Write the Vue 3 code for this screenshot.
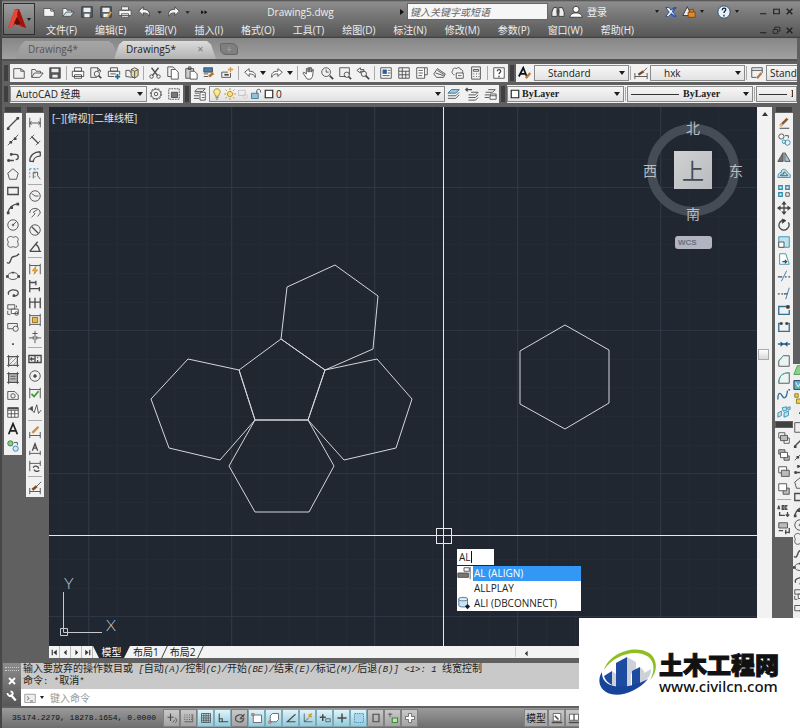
<template>
  <div class="cad">
    <header class="titlebar">
      <button class="app-btn" aria-label="应用程序菜单">
        <svg class="app-logo" viewBox="0 0 20 22">
          <path d="M8 1h4l7 19-6-2-3-3-4 3-5 2z" fill="#c41f14" />
          <path d="M8 1l-7 19 5-2 4-9 1-7z" fill="#e5483a" />
          <path d="M10 9l-3 6 3 2 4-1z" fill="#5c0d08" />
          <path d="M12 1l7 19-5-2-4-12z" fill="#a3130c" />
        </svg>
        <i class="caret"></i>
      </button>
      <div class="title-rows">
        <div class="title-row">
          <div class="quick">
            <button v-for="q in quickTools" :key="q" class="tool quick-tool" :aria-label="q">
              <svg class="icon" viewBox="0 0 16 16" v-html="icons[q]"></svg>
            </button>
            <button class="tool more" aria-label="more">
              <svg class="icon" viewBox="0 0 16 16" v-html="icons.more"></svg>
            </button>
          </div>
          <h1 class="title">Drawing5.dwg</h1>
          <i class="tri-right"></i>
          <input class="search" type="text" placeholder="键入关键字或短语" aria-label="搜索" />
          <div class="account">
            <svg class="icon" viewBox="0 0 16 16" v-html="icons.binoc"></svg>
            <svg class="icon" viewBox="0 0 16 16" v-html="icons.user"></svg>
            <a href="#" class="login">登录</a>
            <i class="caret"></i>
          </div>
          <div class="exchange">
            <svg class="icon" viewBox="0 0 16 16" v-html="icons.exch"></svg>
            <svg class="icon" viewBox="0 0 16 16" v-html="icons.app360"></svg>
            <i class="caret"></i>
          </div>
          <div class="help">
            <svg class="icon" viewBox="0 0 16 16" v-html="icons.helpRound"></svg>
            <i class="caret"></i>
          </div>
          <div class="win">
            <button v-for="w in ['min', 'max', 'close']" :key="w" class="win-btn" :aria-label="w">
              <svg class="icon" viewBox="0 0 16 16" v-html="icons[w]"></svg>
            </button>
          </div>
        </div>
        <nav class="menu">
          <a v-for="m in menus" :key="m" href="#">{{ m }}</a>
          <div class="win">
            <button v-for="w in ['min', 'restore', 'close']" :key="w" class="win-btn" :aria-label="w">
              <svg class="icon" viewBox="0 0 16 16" v-html="icons[w]"></svg>
            </button>
          </div>
        </nav>
      </div>
    </header>

    <div class="doc-tabs">
      <button class="doc-tab">Drawing4*</button>
      <button class="doc-tab active">Drawing5*<span class="tab-x">✕</span></button>
      <button class="new-tab" aria-label="新图形">+</button>
    </div>

    <div class="bars">
      <div class="bar-row">
        <i class="grip"></i>
        <div class="strip">
          <template v-for="(t, i) in stdTools" :key="i">
            <i v-if="t === '|'" class="sep"></i>
            <i v-else-if="t === 'v'" class="caret pad"></i>
            <button v-else class="tool" :aria-label="t">
              <svg class="icon" viewBox="0 0 16 16" v-html="icons[t]"></svg>
            </button>
          </template>
        </div>
        <i class="grip"></i>
        <div class="strip grow">
          <template v-for="s in styleBoxes" :key="s.icon">
            <button class="tool" :aria-label="s.icon">
              <svg class="icon" viewBox="0 0 16 16" v-html="icons[s.icon]"></svg>
            </button>
            <div class="combo" :class="s.size">
              <select :aria-label="s.icon"><option>{{ s.value }}</option></select>
              <i class="caret"></i>
            </div>
            <i class="sep thin"></i>
          </template>
        </div>
      </div>
      <div class="bar-row">
        <i class="grip"></i>
        <div class="strip">
          <div class="combo workspace">
            <select aria-label="工作空间"><option>AutoCAD 经典</option></select>
            <i class="caret"></i>
          </div>
          <button v-for="t in ['gear', 'wsSave']" :key="t" class="tool" :aria-label="t">
            <svg class="icon" viewBox="0 0 16 16" v-html="icons[t]"></svg>
          </button>
        </div>
        <i class="grip"></i>
        <div class="strip">
          <button class="tool" aria-label="layers">
            <svg class="icon" viewBox="0 0 16 16" v-html="icons.layers"></svg>
          </button>
          <div class="combo layer">
            <svg
              v-for="t in ['bulb', 'sun', 'vpFreeze', 'lock', 'swatch']"
              :key="t"
              class="icon mini"
              viewBox="0 0 16 16"
              v-html="icons[t]"
            ></svg>
            <select aria-label="图层"><option>0</option></select>
            <i class="caret"></i>
          </div>
          <button v-for="t in ['layA', 'layB', 'layC']" :key="t" class="tool" :aria-label="t">
            <svg class="icon" viewBox="0 0 16 16" v-html="icons[t]"></svg>
          </button>
        </div>
        <i class="grip"></i>
        <div class="strip grow">
          <div class="combo color serif">
            <svg class="icon mini" viewBox="0 0 16 16" v-html="icons.swatch"></svg>
            <select aria-label="颜色"><option>ByLayer</option></select>
            <i class="caret"></i>
          </div>
          <i class="sep thin"></i>
          <div class="combo ltype serif">
            <i class="rule"></i>
            <select aria-label="线型"><option>ByLayer</option></select>
            <i class="caret"></i>
          </div>
          <i class="sep thin"></i>
          <div class="combo lweight serif">
            <i class="rule"></i>
            <select aria-label="线宽"><option>ByLayer</option></select>
          </div>
        </div>
      </div>
    </div>

    <main class="work">
      <aside class="dock">
        <div v-for="(col, c) in leftDock" :key="c" class="vbar">
          <i class="vgrip"></i>
          <div class="vstrip">
            <template v-for="(t, i) in col" :key="i">
              <i v-if="t === '|'" class="hsep"></i>
              <button v-else class="tool" :aria-label="t">
                <svg class="icon" viewBox="0 0 16 16" v-html="icons[t]"></svg>
              </button>
            </template>
          </div>
        </div>
      </aside>

      <section class="view">
        <div class="canvas">
          <svg class="drawing">
            <g stroke="#242b35">
              <line v-for="x in minorX" :key="'mx' + x" :x1="x" y1="0" :x2="x" y2="100%" />
              <line v-for="y in minorY" :key="'my' + y" x1="0" :y1="y" x2="100%" :y2="y" />
            </g>
            <g stroke="#2c3644">
              <line v-for="x in majorX" :key="'x' + x" :x1="x" y1="0" :x2="x" y2="100%" />
              <line v-for="y in majorY" :key="'y' + y" x1="0" :y1="y" x2="100%" :y2="y" />
            </g>
            <g class="shapes">
              <polygon v-for="p in polygons" :key="p" :points="p" />
            </g>
            <g class="cross">
              <path d="M394.5 0V1000M0 428.5H2000" />
              <rect x="387.500" y="421.500" width="15" height="15" />
            </g>
            <g class="ucs">
              <path d="M14.500 485V525.500H53M11.500 521.500h7v7h-7z" />
              <text x="15" y="482">Y</text>
              <text x="57" y="524">X</text>
            </g>
          </svg>

          <span class="view-label">[−][俯视][二维线框]</span>

          <div class="cube">
            <span class="n">北</span>
            <span class="w">西</span>
            <span class="e">东</span>
            <span class="s">南</span>
            <b class="face">上</b>
          </div>
          <button class="wcs">WCS</button>

          <div class="dyn">
            <input class="dyn-input" type="text" :value="typed" aria-label="命令" />
            <ul class="dyn-list">
              <li v-for="(s, i) in suggestions" :key="s.text">
                <span class="sug-icon">
                  <svg v-if="s.icon" class="icon" viewBox="0 0 16 16" v-html="icons[s.icon]"></svg>
                </span>
                <span class="sug-text" :class="{ on: i === 0 }">{{ s.text }}</span>
              </li>
            </ul>
          </div>
        </div>
        <div class="layouts">
          <button v-for="a in ['first', 'prev', 'next', 'last']" :key="a" class="nav" :aria-label="a">
            <svg class="icon" viewBox="0 0 16 16" v-html="icons[a]"></svg>
          </button>
          <button class="layout current">模型</button>
          <button class="layout">布局1</button><i class="slash"></i>
          <button class="layout">布局2</button><i class="slash"></i>
          <div class="hscroll"><svg class="icon" viewBox="0 0 16 16" v-html="icons.prev"></svg></div>
        </div>
      </section>

      <div class="vscroll">
        <i class="tri-up"></i>
        <i class="thumb"></i>
      </div>

      <aside class="dock right">
        <div class="vbar">
          <template v-for="(col, c) in rightDock" :key="c">
            <i class="vgrip"></i>
            <div class="vstrip">
              <template v-for="(t, i) in col" :key="i">
                <i v-if="t === '|'" class="hsep"></i>
                <button v-else class="tool" :aria-label="t">
                  <svg class="icon" viewBox="0 0 16 16" v-html="icons[t]"></svg>
                </button>
              </template>
            </div>
          </template>
        </div>
      </aside>

      <div class="behind">
        <svg v-for="(t, i) in behindTools" :key="i" class="icon" viewBox="0 0 16 16" v-html="icons[t]"></svg>
      </div>
    </main>

    <section class="command">
      <div class="cmd-side">
        <i class="dots"></i>
        <svg class="icon" viewBox="0 0 16 16" v-html="icons.cmdClose"></svg>
        <svg class="icon" viewBox="0 0 16 16" v-html="icons.wrench"></svg>
      </div>
      <div class="cmd-body">
        <div class="history">
          <p v-for="(line, l) in history" :key="l">
            <span v-for="(r, i) in line" :key="i" :class="{ han: r.han, it: r.it }">{{ r.text }}</span>
          </p>
        </div>
        <div class="prompt">
          <svg class="icon" viewBox="0 0 16 16" v-html="icons.prompt"></svg>
          <i class="caret"></i>
          <input type="text" placeholder="键入命令" aria-label="键入命令" />
        </div>
      </div>
    </section>

    <footer class="status">
      <span class="coords">35174.2279, 18278.1654, 0.0000</span>
      <button v-for="s in modes" :key="s.icon" class="mode" :class="{ on: s.on }" :aria-label="s.icon">
        <svg class="icon" viewBox="0 0 16 16" v-html="icons[s.icon]"></svg>
      </button>
      <div class="status-right">
        <button class="mode model">模型</button>
        <button class="mode" aria-label="layout"><svg class="icon" viewBox="0 0 16 16" v-html="icons.paper"></svg></button>
        <button class="mode" aria-label="views"><svg class="icon" viewBox="0 0 16 16" v-html="icons.views"></svg></button>
      </div>
    </footer>

    <a class="brand" href="#">
      <svg class="brand-logo" viewBox="0 0 60 50">
        <path d="M5 22C10 5 36-4 50 5c10 7 8 20 1 27 5-9 5-19-3-24C36 1 15 7 5 22z" fill="#8fbe22" />
        <path d="M17 15l11-6v30H17z" fill="#1d4b9f" />
        <path d="M28 9l9 5v9l-5 3v13h-4z" fill="#cdd2d8" />
        <path d="M33 23l8-4v18l-8 3z" fill="#1d4b9f" />
        <path d="M41 19l4 4v11l-4 3zM45 25l7-4c0 6-2 9-7 12z" fill="#cdd2d8" />
        <path d="M5 28l8-5v14c-4-2-7-5-8-9z" fill="#1d4b9f" />
        <path d="M13 23l4 3v12l-4-1z" fill="#cdd2d8" />
        <path d="M3 24c-1 16 22 20 46 7C36 46 17 50 7 44-1 39-1 30 3 24z" fill="#17439a" />
      </svg>
      <span class="brand-text">
        <strong>土木工程网</strong>
        <em>www.civilcn.com</em>
      </span>
    </a>
  </div>
</template>

<script setup>
import { ref } from 'vue';

const typed = ref('AL');

const menus = [
  '文件(F)', '编辑(E)', '视图(V)', '插入(I)', '格式(O)', '工具(T)',
  '绘图(D)', '标注(N)', '修改(M)', '参数(P)', '窗口(W)', '帮助(H)',
];

const blue = 'stroke="#2f8fae"';
const cyan = 'fill="#bfe3ec" stroke="#2f8fae"';
const solid = 'fill="#444" stroke="none"';
const white = 'fill="#f4f4f4" stroke="#555"';
const dim = '<path d="M2 2v11M14 2v11M2 8h12M4 6l-2 2 2 2M12 6l2 2-2 2"/>';

// 16x16 glyphs, stroke colour comes from the toolbar
const icons = {
  // quick access
  qNew: `<path ${white} d="M2 4h8l4 3v6H2z"/><path d="M10 4v3h4"/>`,
  qOpen: `<path ${white} d="M2 13V4h4l1 2h5v2"/><path fill="#cfe0e8" d="M2 13l4-5h9l-4 5z"/>`,
  qSave: `<path fill="#54636f" stroke="#333" d="M2 2h12v12H2z"/><path fill="#eee" stroke="none" d="M4 3h8v5H4zM5 10h6v4H5z"/>`,
  qSaveAs: `<path fill="#54636f" stroke="#333" d="M2 2h12v12H2z"/><path fill="#eee" stroke="none" d="M4 3h8v5H4zM5 10h6v4H5z"/><path stroke="#e7a13a" stroke-width="2" d="M9 14l5-6"/>`,
  qPrint: `<path ${white} d="M4 2h8v4H4zM1 6h14v6H1zM4 10h8v4H4z"/>`,
  qUndo: `<path fill="#f4f4f4" stroke="#444" d="M2 7l5-5v3c5 0 8 2 7 8-1-3-3-4-7-4v3z"/>`,
  qRedo: `<path fill="#f4f4f4" stroke="#444" d="M14 7L9 2v3c-5 0-8 2-7 8 1-3 3-4 7-4v3z"/>`,
  qCaret: '<path fill="#222" stroke="none" d="M5 7h5l-2.500 3z"/>',
  more: '<path fill="#111" stroke="none" d="M2 5l5 3.500L2 12zM8 5l5 3.500L8 12z"/>',
  binoc: '<path fill="#eee" stroke="#333" d="M3 3h4v10H1V8zM9 3h4l2 5v5H9zM7 6h2v3H7z"/>',
  user: '<circle fill="#fff" stroke="#333" cx="8" cy="5" r="3.500"/><path fill="#fff" stroke="#333" d="M1 14c0-3 3-5 7-5s7 2 7 5z"/>',
  exch: '<path fill="#fff" stroke="#1f3f8f" d="M2 3h4l2 3 3-3h3l-4 5 4 5h-4l-2-3-3 3H2l4-5z"/><path fill="#2c57b5" stroke="none" d="M10 3h4l-5 6zM7 8l3 5h4z"/>',
  app360: '<path fill="#eee" stroke="#333" d="M1 12L6 2l5 10z"/><path fill="#e08a2c" stroke="#7a4210" d="M7 8h8v6H7zM9 8V5h4v3"/>',
  helpRound: '<circle cx="8" cy="8" r="7" fill="#e9f1f8" stroke="#2a4a70"/><path d="M6 6c0-3 4-3 4-1 0 2-2 2-2 4M8 11v2" stroke="#123" stroke-width="1.500"/>',
  min: '<path stroke="#222" stroke-width="2" d="M2 12h11"/>',
  max: '<path stroke="#222" stroke-width="2" d="M3 4h10v8H3z"/>',
  restore: '<path stroke="#222" stroke-width="1.500" d="M5 6V2h9v7h-4M2 6h8v7H2z"/>',
  close: '<path stroke="#222" stroke-width="2.500" d="M3 3l10 10M13 3L3 13"/>',

  // standard
  new: '<path d="M2 3h8l4 3v8H2zM10 3v3h4"/>',
  open: '<path d="M2 13V4h4l1 2h5v2M2 13l3-5h10l-4 5z"/>',
  save: '<path fill="#555" d="M2 2h12v12H2z"/><path fill="#eee" stroke="none" d="M4 3h8v4H4zM5 10h6v3H5z"/>',
  print: '<path fill="#fff" d="M4 2h8v4H4zM1.500 6h13v6h-13zM4 10h8v4H4z"/>',
  preview: '<path d="M9 13H2V2h8l3 3v2M10 2v3h3"/><circle cx="9" cy="9" r="3"/><path stroke-width="2" d="M11 11l3 3"/>',
  publish: '<path d="M4 2h8v4H4zM1.500 6h13v4M1.500 6v6H8M4 9h6"/><path stroke="#1d6a8c" stroke-width="2" d="M12 9v6M9 12h6"/>',
  dwf: '<path d="M1 12V5h4l1 2h3v6z"/><path fill="#e8d9a0" d="M7 4l4-2 4 2v7l-4 3-4-3zM7 4l4 2 4-2M11 6v8"/>',
  cut: '<path stroke-width="1.500" d="M4 2l7 9M12 2L5 11"/><circle cx="4" cy="12" r="2"/><circle cx="12" cy="12" r="2"/>',
  copy: '<path d="M2 1h6l2 2v9H2z"/><path fill="#fff" d="M6 4h5l3 3v8H6z"/>',
  paste: '<path fill="#ccc" d="M2 3h9v11H2zM5 1h3v3H5z"/><path fill="#fff" d="M7 6h5l3 3v6H7z"/>',
  match: '<path fill="#3f7fb3" d="M2 2h10v5H2z"/><path d="M2 9h5M2 12h5"/><path stroke="#b8732e" stroke-width="3" d="M8 12l5-4"/>',
  blockEd: '<path d="M2 7h7M2 7v6h10V8"/><path d="M5 10h5" stroke-width="2"/><path stroke="#e09a2c" stroke-width="1.500" d="M12 1v6M9 4h6"/>',
  undo: '<path fill="#fff" d="M2 7l5-4v3c5 0 8 2 7 7-1-3-3-4-7-4v3z"/>',
  redo: '<path fill="#fff" d="M14 7L9 3v3c-5 0-8 2-7 7 1-3 3-4 7-4v3z"/>',
  pan: '<path fill="#fff" d="M5 9V3h2v4V2h2v5V2h2v5l1-3h1l-1 8-2 3H6L1 8l1-1z"/>',
  zoomRt: '<circle cx="7" cy="7" r="5"/><path d="M7 4v3h3"/><path stroke-width="2" d="M11 11l4 4"/>',
  zoomWin: '<path d="M2 2h11v8M2 2v10h7"/><circle cx="10" cy="10" r="3"/><path stroke-width="2" d="M12 12l3 3"/>',
  zoomPrev: '<path d="M1 5l4-3v2h4v2H5v2z"/><circle cx="9" cy="9" r="3"/><path stroke-width="2" d="M11 11l4 4"/>',
  props: '<path fill="#fff" d="M2 2h12v12H2z"/><path fill="#2e5f96" stroke="none" d="M4 4h5v5H4z"/><path d="M10 5h3M10 8h3M4 11h8"/>',
  dc: '<path d="M2 2h12v12H2zM2 6h12M6 2v12M10 6v8M2 10h12"/>',
  palette: '<path fill="#fff" d="M2 2h9v12H2zM11 2h3v8h-3"/><path d="M4 5h5M4 8h5M4 11h4"/>',
  sheet: '<path d="M1 9l4-6 9 6-2 4H4z"/><path d="M3 8l9 3M5 5l8 5"/>',
  markup: '<path d="M2 5c0-3 3-3 4-2 2-2 5-1 5 1 3 0 3 4 1 5M2 5c-2 2 0 5 2 5"/><path fill="#fff" d="M6 8h8v6H6zM8 11h4"/>',
  calc: '<path d="M3 1h10v14H3zM5 4h6v2H5zM5 9h1M8 9h1M11 9h1M5 12h1M8 12h1M11 12h1"/>',
  help: '<path fill="#fff" d="M2 2h12v12H2z"/><path stroke-width="1.500" d="M6 6c0-2.500 4-2.500 4 0 0 1.500-2 1.500-2 3.500M8 11v2"/>',
  textStyle: '<path stroke="#111" stroke-width="2" d="M1 12L6 2l4 10M3 9h6"/><path stroke="#b9773c" stroke-width="2.500" d="M9 14l5-6"/>',
  dimStyle: '<path d="M1 8v7M15 8v7M1 12h14"/><path stroke="#7d4a22" stroke-width="2.500" d="M5 10l6-4"/><path d="M11 6l4-4"/>',
  tblStyle: '<path d="M2 2h12v6M2 2v11h5M2 5h12"/><path stroke="#b9773c" stroke-width="2.500" d="M8 14l5-6"/>',
  gear: '<circle cx="8" cy="8" r="2"/><circle cx="8" cy="8" r="5.500"/><circle cx="8" cy="8" r="6.500" stroke-dasharray="2 2"/>',
  wsSave: '<path stroke-dasharray="2 1" d="M2 2h12v12H2z"/><path fill="#777" d="M5 6h7v6H5z"/>',
  layers: '<path d="M5 2h9l-3 3H2zM2 7h5M1 10h6M1 13h6"/><path fill="#fff" d="M8 6h6v9H8zM10 9h3M10 12h3"/>',
  bulb: '<path fill="#ffe98a" stroke="#8b7a2a" d="M8 1c-5 0-5 5-3 7l1 3h4l1-3c2-2 2-7-3-7z"/><path d="M6 13h4M7 15h2"/>',
  sun: '<circle cx="8" cy="8" r="3.500" fill="#ffe27a" stroke="#a87f1c"/><path stroke="#a87f1c" d="M8 0v3M8 13v3M0 8h3M13 8h3M2 2l2 2M12 12l2 2M14 2l-2 2M4 12l-2 2"/>',
  vpFreeze: '<path stroke="#bbb" d="M2 3h9v7H2z"/><circle cx="11" cy="11" r="3" stroke="#ccc"/>',
  lock: '<path fill="#8fc3da" stroke="#2b6785" d="M2 7h9v7H2z"/><path stroke="#333" d="M9 7V4c0-3 5-3 5 0v2"/>',
  swatch: '<path fill="#fff" stroke="#222" stroke-width="1.500" d="M3 3h10v10H3z"/>',
  layA: '<path fill="#9fd0e2" stroke="#2b6785" d="M5 3h9l-4 4H1z"/><path d="M1 10h9l4-4M1 13h9l4-4"/>',
  layB: '<path d="M7 6h8l-3 3H4M4 12h8l3-3M4 15h8l3-3"/><path stroke-width="1.500" d="M8 3H1M3 1L1 3l2 2"/>',
  layC: '<path d="M6 3h8l-3 3H3M2 9h5M2 12h5"/><path fill="#fff" d="M8 8h7v6H8zM8 10h7"/>',

  // draw
  line: `<path stroke-width="1.500" d="M2 14L14 2"/><path ${solid} d="M1 13h3v3H1zM12 1h3v3h-3z"/>`,
  xline: `<path d="M2 14L14 2"/><path ${solid} d="M4 9h3v3H4zM9 5h3v3H9z"/>`,
  pline: '<path stroke-width="1.500" d="M2 12h7M6 5h5c4 0 4 6 0 6"/><path fill="#444" d="M2 11h2v2H2zM5 4h2v2H5z"/>',
  polygon: '<path d="M8 2l6 5-2 7H4L2 7z"/>',
  rect: '<path stroke-width="1.500" d="M2 4h12v8H2z"/>',
  arc: `<path stroke-width="1.500" d="M2 14C3 8 7 4 14 3"/><path ${solid} d="M1 12h3v3H1zM5 6h3v3H5zM12 2h3v3h-3z"/>`,
  circle: '<circle cx="8" cy="8" r="6"/><circle cx="8" cy="8" r="1"/><path d="M8 8l4-4"/>',
  revcloud: '<path d="M4 2c2-1 3 0 4 1 2-2 6-1 6 2 0 1-1 2-1 3 2 2 1 6-2 6-1 0-2 0-3-1-2 2-6 1-6-2 0-1 0-2 1-3-2-2-2-5 1-6z"/>',
  spline: '<path stroke-width="1.500" d="M1 12c4 3 4-4 6-6s4 1 8-4"/>',
  ellipse: `<ellipse cx="8" cy="8" rx="6" ry="4"/><path ${solid} d="M0 7h3v3H0zM13 7h3v3h-3zM7 3h2v2H7z"/>`,
  earc: '<path stroke-width="1.500" d="M3 10C0 4 14 2 14 8c0 3-4 4-6 3"/><path fill="#444" d="M8 10h2v2H8z"/>',
  insert: '<path d="M2 2h8v5H2z"/><path fill="#fff" d="M6 7h8v5H6zM2 9v4h3M12 5V3"/><circle cx="12" cy="12" r="2"/>',
  block: '<path d="M2 4h11v4M2 4v6h6"/><circle cx="11" cy="10" r="3"/>',
  point: '<path fill="#444" stroke="none" d="M7 7h2v2H7z"/>',
  hatch: '<path d="M3 3h10v10H3zM1 3h14M1 13h14M3 1v14M13 1v14"/><path stroke="#888" d="M3 8l5-5M3 13L13 3M8 13l5-5"/>',
  gradient: '<path fill="#bbb" d="M3 3h10v10H3z"/><path d="M1 3h14M1 13h14M3 1v14M13 1v14M5 6h6M5 9h6"/>',
  region: '<path d="M2 13V4h8l4 4v5z"/><circle cx="8" cy="9" r="2.500"/>',
  table: '<path fill="#fff" d="M2 3h12v11H2z"/><path d="M2 6h12M2 10h12M6 6v8M10 6v8" /><path stroke-width="2" d="M2 4h12"/>',
  mtext: '<path stroke="#222" stroke-width="2" d="M3 14L8 2l5 12M5 10h6"/>',
  addSel: '<circle cx="5" cy="5" r="3" fill="#8cc98c" stroke="#2c7d3c"/><circle cx="11" cy="11" r="3" fill="#cfe8f5" stroke="#2f7fae"/><path d="M9 4h4v3"/>',

  // dimension
  dLin: dim,
  dAli: '<path stroke-width="1.500" d="M4 4l8 8"/><path d="M2 7l5-5M9 14l5-5"/>',
  dArc: '<path stroke-width="1.500" d="M2 13C2 6 7 2 14 2M6 14c0-4 3-7 8-7M2 13h4M14 2v5"/>',
  dOrd: `<path ${blue} stroke-dasharray="2 2" d="M2 2h12M2 2v12M8 2v12"/><path d="M6 13V6h5v4l3 4"/>`,
  dRad: '<circle cx="8" cy="8" r="6"/><path d="M8 8l-4-3M8 8h4"/>',
  dJog: '<path d="M2 8c0-7 12-7 12 0M4 13l4-4-2-2 5-3M14 8l-3 4"/>',
  dDia: '<circle cx="8" cy="8" r="6"/><path stroke-width="1.500" d="M4 4l8 8"/>',
  dAng: '<path stroke-width="1.500" d="M2 13L11 2M2 13h13M9 5c3 2 4 4 4 8"/>',
  dQuick: '<path d="M2 2v12M14 2v12M2 4h12"/><path fill="#f2c24a" stroke="#c8881c" d="M9 5l-4 5h3l-1 4 4-5H8z"/>',
  dBase: '<path stroke-width="1.500" d="M2 1v14M2 4h7M9 2v5M2 11h11M13 9v5"/>',
  dCont: '<path stroke-width="1.500" d="M2 2v12M8 2v12M14 2v12M2 7h12"/>',
  dSpace: '<path d="M2 1v14M14 1v14M2 3h12M2 13h12"/><path fill="#e8b84a" stroke="#85651a" d="M5 5h6v6H5z"/>',
  dBreak: '<path d="M1 9h5M10 9h5M8 1v14M5 4h6M6 7v4M10 7v4"/>',
  tol: '<path d="M1 4h14v8H1zM8 4v8M2 8h5M4 6v4M11 6v1M11 9v2" stroke-width="1.500"/>',
  cmark: '<circle cx="8" cy="8" r="6"/><path stroke-width="2" d="M6 8h4M8 6v4"/>',
  insp: '<path d="M2 2v12M14 2v12M2 4h12"/><path stroke="#3a9a3a" stroke-width="2" d="M4 9l3 3 5-6"/>',
  jogLin: '<path d="M0 7h4l3 4 3-9 2 10 3-4"/><path fill="#444" d="M2 6l3-2v5z"/>',
  dEdit: '<path d="M2 8v7M14 8v7M2 12h12"/><path stroke="#cf8a3c" stroke-width="2.500" d="M5 9l7-7"/>',
  dText: '<path d="M2 10v5M14 10v5M2 13h12"/><path stroke-width="1.500" d="M5 10l3-8 3 8M6 7h4"/>',
  dUpd: '<path d="M2 2v12M14 2v6M2 5h12"/><path stroke-width="1.500" d="M6 10c1-3 6-2 6 1M13 13c-2 2-6 1-6-1"/>',
  dSty: '<path d="M2 8v7M14 8v7M2 12h12"/><path stroke="#7d4a22" stroke-width="3" d="M5 10l5-4"/><path d="M10 6l5-5"/>',

  // modify
  erase: '<path stroke="#333" d="M3 14h11"/><path stroke="#8a5a32" stroke-width="3" d="M4 11l8-8"/><path stroke="#e8c193" stroke-width="2" d="M3 12l3-3"/>',
  mcopy: `<circle cx="5" cy="4" r="3"/><circle cx="12" cy="11" r="3" ${blue}/><circle cx="8" cy="10" r="2" ${blue}/><path d="M9 3h4v3"/>`,
  mirror: '<path fill="#777" d="M7 3v10H1z"/><path fill="#9cd" d="M9 3v10h6z"/>',
  offset: `<path ${cyan} d="M1 12h14c1-5-2-4-3-6C10 1 4 2 5 6c-3 0-4 3-4 6z"/><path d="M4 10h8c0-2-2-2-3-4-1-1-2 0-1 2-2 0-4 0-4 2z"/>`,
  array: `<path ${blue} stroke-width="1.500" d="M2 2h4v4H2zM10 2h4v4h-4zM2 10h4v4H2z"/><path d="M10 10h4v4h-4z"/>`,
  move: `<path stroke-width="1.500" d="M8 2v12M2 8h12"/><path ${solid} d="M8 0l3 4H5zM8 16l3-4H5zM0 8l4-3v6zM16 8l-4-3v6z"/>`,
  rotate: '<path stroke-width="1.500" d="M10 3C2 1 0 10 5 13s11-3 8-8"/><path fill="#333" d="M6 1l4 2-4 3z"/>',
  scale: `<path ${cyan} d="M2 2h12v12H2z"/><path fill="#fff" d="M2 8h6v6H2z"/>`,
  stretch: `<path fill="#fff" ${blue} d="M3 2h7l4 12H3z"/><path stroke-width="1.500" d="M6 11h5M9 9l2 2-2 2"/>`,
  trim: '<path d="M1 9h5M9 9h2M13 9h2" stroke-width="1.500"/><path stroke="#2f6f9e" d="M5 14l6-12"/>',
  extend: '<path d="M1 9h2M5 9h2M8 9h4" stroke-width="1.500"/><path stroke="#2f6f9e" d="M10 15l4-13"/>',
  breakPt: '<path stroke="#346f94" stroke-width="1.500" d="M11 4H2v9h12V8"/><path fill="#333" d="M11 3h3v3h-3z"/>',
  breakk: '<path stroke="#346f94" stroke-width="1.500" d="M5 4H2v9h12V4h-3"/><path fill="#333" d="M4 3h2v2H4zM10 3h2v2h-2z"/>',
  join: '<path stroke="#255a80" stroke-width="1.500" d="M1 8h14"/><path fill="#255a80" stroke="none" d="M4 5l4 3-4 3zM12 5L8 8l4 3z"/>',
  chamfer: '<path fill="#eaf5f3" d="M2 14V8l5-6h7v12z"/><path stroke="#4ab3a6" d="M2 8l5-6"/>',
  fillet: '<path fill="#eaf5f3" d="M2 14c0-8 4-12 12-12v12z"/><path stroke="#4ab3a6" d="M2 14c0-8 4-12 12-12"/>',
  blend: '<path stroke="#2f6f9e" stroke-width="1.500" d="M1 13c0-9 3-8 5-4s5 3 6-6M13 2h2"/>',
  explode: `<path ${cyan} d="M1 9l4-2v5l-4 2zM6 3l5-1v4l-4 1zM8 9l5-2v5l-5 2zM12 3l3-1v3l-2 1z"/>`,
  ord1: '<path fill="#fff" d="M2 2h7v6H2zM8 8h6v6H8z"/><path fill="#bbb" d="M4 5h8v6H4z"/>',
  ord2: '<path fill="#bbb" d="M2 2h7v5H2zM8 9h6v5H8z"/><path fill="#fff" d="M4 5h8v6H4z"/>',
  ord3: '<path fill="#fff" d="M2 2h9v7H2z"/><path fill="#bbb" d="M5 6h9v7H5z"/>',
  ord4: '<path fill="#bbb" d="M7 7h7v7H7z"/><path fill="#fff" d="M2 2h9v8H2z"/>',
  abc: '<path stroke-width="1.500" d="M1 6l1-4 1 4M6 2v4h2V2zM12 2h-2v4h2M3 9v4h6M12 9v5M10 12l2 2 2-2"/>',
  ordH: '<path fill="#bbb" d="M2 2h10v6H2z"/><path stroke-width="1.500" d="M2 11h5M10 10v5M14 8v6M9 13h5"/>',

  // sliver of the window beneath
  bGreen: '<path fill="#8bd08b" stroke="#4a9a4a" d="M1 12L5 2h8v10z"/>',
  bTeal: '<path fill="#5fb5bd" stroke="#226" d="M1 3h14v10H1z"/><path stroke="#fff" d="M3 5l3 5 3-5 3 5"/>',
  bYellow: '<path fill="#e8d04c" stroke="#8a7a1a" d="M2 2h4v4H2zM4 8h10v5H4z"/>',

  // layout tabs
  first: '<path fill="#333" stroke="none" d="M12 3v10L6 8zM3 3h2v10H3z"/>',
  prev: '<path fill="#333" stroke="none" d="M10 3v10L5 8z"/>',
  next: '<path fill="#333" stroke="none" d="M6 3v10l5-5z"/>',
  last: '<path fill="#333" stroke="none" d="M4 3v10l6-5zM11 3h2v10h-2z"/>',

  // command line
  cmdClose: '<path stroke="#fff" stroke-width="2.500" d="M4 4l8 8M12 4l-8 8"/>',
  wrench: '<path stroke="#fff" stroke-width="3" d="M6 6l7 8"/><path stroke="#fff" stroke-width="2.500" d="M2 4c0 4 4 5 6 3s1-5-2-5"/>',
  prompt: '<path fill="#eee" stroke="#888" d="M1 3h14v11H1z"/><path d="M4 6l3 2.500L4 11M8 12h4"/>',
  align: '<path fill="#777" d="M1 8h12v5H1z"/><path d="M8 2h6v4H8zM15 1v14"/>',
  db: '<path fill="#cfe2f0" stroke="#47708f" d="M2 3c0-2 10-2 10 0v8c0 2-10 2-10 0zM2 4c0 2 10 2 10 0"/><path fill="#123" stroke="none" d="M12 9l3 3-3 3-3-3z"/>',

  // status
  infer: '<path stroke-width="1.500" d="M6 2v10M2 7h8"/><path d="M12 8c3 0 3 6 0 6M9 14l3-4"/>',
  snap: '<path stroke-dasharray="1 2" stroke-width="1.500" d="M2 4h10M2 7h10M2 10h10"/><path d="M2 13h11V3"/>',
  grid: '<path d="M2 2h12v12H2zM5 2v12M8 2v12M11 2v12M2 5h12M2 8h12M2 11h12"/>',
  ortho: '<path stroke-width="1.500" d="M3 2v11h12M3 9h4v4"/>',
  polar: '<path stroke-width="1.500" d="M13 7c-2-6-11-3-11 2s9 6 11 1M8 9l6-6M8 9h6"/>',
  osnap: '<path fill="#fff" d="M3 4h11v10H3z"/><path fill="#e39a8a" stroke="#b55" d="M1 2h3v3H1z"/>',
  osnap3: '<path fill="#fff" d="M3 5l3-3h8v8l-3 3H3z"/><path stroke="#b55" d="M1 12h3v3H1z"/>',
  otrack: '<path stroke-width="1.500" d="M14 3L3 13h11"/>',
  ducs: '<path d="M3 2v11h11M3 13l6-5"/><path stroke="#d99a20" stroke-width="2" d="M9 7l4-5M9 3l4 4"/>',
  dyn: '<path stroke-width="2" d="M5 3v9M1 7h8"/><path d="M9 9h6v4H9z"/>',
  lwt: '<path stroke-width="2" d="M8 2v12M2 8h12"/>',
  tpy: '<path fill="#a9d5ea" stroke="#3a86ad" stroke-dasharray="2 1" d="M2 2h12v12H2z"/>',
  qp: '<path stroke-width="1.500" d="M4 3h8v10H4z"/>',
  sc: '<path d="M1 3h6M4 1v6"/><path fill="#bfe0b0" stroke="#3f8a3f" stroke-width="1.500" d="M7 8h7v6H7z"/>',
  am: '<path fill="#fff" stroke="#555" d="M6 2h4v4h4v4h-4v4H6v-4H2V6h4z"/>',
  paper: '<path fill="#fff" d="M3 2h10v10H3z"/><path stroke-width="2" d="M1 14h14M5 5l5 5"/>',
  views: '<path fill="#fff" d="M2 3h6v8H2zM8 3h6v8H8z"/><path stroke-width="2" d="M1 14h14"/>',
};

const quickTools = ['qNew', 'qOpen', 'qSave', 'qSaveAs', 'qPrint', 'qUndo', 'qCaret', 'qRedo', 'qCaret2'];
icons.qCaret2 = icons.qCaret;

const stdTools = [
  'new', 'open', 'save', '|', 'print', 'preview', 'publish', 'dwf', '|',
  'cut', 'copy', 'paste', 'match', 'blockEd', '|', 'undo', 'v', 'redo', 'v', '|',
  'pan', 'zoomRt', 'zoomWin', 'zoomPrev', '|',
  'props', 'dc', 'palette', 'sheet', 'markup', 'calc', '|', 'help',
];

const styleBoxes = [
  { icon: 'textStyle', value: 'Standard', size: 'wide' },
  { icon: 'dimStyle', value: 'hxk', size: 'wide' },
  { icon: 'tblStyle', value: 'Standard', size: 'rest' },
];

const leftDock = [
  [
    'line', 'xline', 'pline', 'polygon', 'rect', 'arc', 'circle', 'revcloud', 'spline', 'ellipse',
    'earc', 'insert', 'block', 'point', 'hatch', 'gradient', 'region', 'table', 'mtext', 'addSel',
  ],
  [
    'dLin', 'dAli', 'dArc', 'dOrd', '|', 'dRad', 'dJog', 'dDia', 'dAng', '|',
    'dQuick', 'dBase', 'dCont', 'dSpace', 'dBreak', '|', 'tol', 'cmark', 'insp', 'jogLin', '|',
    'dEdit', 'dText', 'dUpd', '|', 'dSty',
  ],
];

const rightDock = [
  [
    'erase', 'mcopy', 'mirror', 'offset', 'array', 'move', 'rotate', 'scale', 'stretch',
    'trim', 'extend', 'breakPt', 'breakk', 'join', 'chamfer', 'fillet', 'blend', 'explode',
  ],
  ['ord1', 'ord2', 'ord3', 'ord4', '|', 'abc', 'ordH'],
];

const behindTools = [
  'bGreen', 'bTeal', 'bYellow', 'point', 'new', 'line', 'xline', 'pline', 'polygon', 'rect',
  'arc', 'circle', 'revcloud', 'spline', 'ellipse', 'earc', 'insert', 'block', 'point',
  'hatch', 'gradient', 'region', 'table',
];

// grid: five minor cells to one major cell
const cell = 28.6;
const majorX = [39.5, 182.5, 325.5, 468.5, 611.5];
const majorY = [80.5, 223.5, 366.5, 509.5];
const minorX = Array.from({ length: 24 }, (_, i) => Math.round(11 + i * cell) + 0.5);
const minorY = Array.from({ length: 18 }, (_, i) => Math.round(23 + i * cell) + 0.5);

const polygons = [
  '232,232 276,263 259,313 206,313 190,263',
  '286,158 329,189 324,242 276,263 232,232 238,180',
  '276,263 328,252 363,292 347,341 295,353 259,313',
  '206,313 259,313 285,359 260,405 206,405 180,359',
  '190,263 206,313 171,353 120,341 102,292 139,252',
  '516,218 560,243 560,296 516,322 471,297 471,244',
];

const suggestions = [
  { text: 'AL (ALIGN)', icon: 'align' },
  { text: 'ALLPLAY' },
  { text: 'ALI (DBCONNECT)', icon: 'db' },
];

const modes = [
  { icon: 'infer' }, { icon: 'snap' }, { icon: 'grid', on: true }, { icon: 'ortho', on: true },
  { icon: 'polar' }, { icon: 'osnap', on: true }, { icon: 'osnap3', on: true },
  { icon: 'otrack', on: true }, { icon: 'ducs', on: true }, { icon: 'dyn', on: true },
  { icon: 'lwt', on: true }, { icon: 'tpy', on: true }, { icon: 'qp' }, { icon: 'sc' }, { icon: 'am' },
];

// splits a line into Chinese and Latin runs; the option list is slanted
function runs(text) {
  let inside = false;
  return text.match(/[\u4e00-\u9fa5]+|[^\u4e00-\u9fa5]+/g).map((part) => {
    const han = /[\u4e00-\u9fa5]/.test(part);
    if (part.includes('[')) inside = true;
    const it = inside && !han;
    return { text: part, han, it };
  });
}

const history = [
  '输入要放弃的操作数目或 [自动(A)/控制(C)/开始(BE)/结束(E)/标记(M)/后退(B)] <1>: 1 线宽控制',
  '命令: *取消*',
].map(runs);
</script>

<style>
body {
  background: #5c5c5c;
}
</style>

<style scoped>
.cad {
  position: relative;
  display: flex;
  flex-direction: column;
  min-height: 100vh;
  overflow: hidden;
  box-sizing: border-box;
  background: #606060;
  border-left: 2px solid #474747;
  font-family: "Open Sans", "Noto Sans CJK SC", sans-serif;
  font-size: 10px;
  line-height: 12px;
  color: #222;
}
button, input, select {
  font: inherit;
  color: inherit;
  padding: 0;
  margin: 0;
  border: none;
  background: none;
  border-radius: 0;
  outline: none;
}
a {
  color: inherit;
  text-decoration: none;
}
i {
  display: block;
  flex: none;
}
.icon {
  display: block;
  flex: none;
  width: 14px;
  height: 14px;
  fill: none;
  stroke: #4a4a4a;
}
.tool {
  display: flex;
  flex: none;
  align-items: center;
  justify-content: center;
  width: 18px;
  height: 17px;
}
.caret {
  width: 0;
  height: 0;
  border: 3px solid transparent;
  border-top: 4px solid #1d1d1d;
  border-bottom: none;
}
.caret.pad {
  margin: 0 2px 0 1px;
}

/* title */
.titlebar {
  display: flex;
  height: 38px;
  padding-right: 4px;
  background: linear-gradient(#4a4a4a 0, #8d8d8d 2px, #787878 14px, #585858 36px, #3a3a3a 38px);
  color: #eee;
}
.app-btn {
  display: flex;
  flex: none;
  align-items: center;
  justify-content: center;
  width: 32px;
  height: 32px;
  margin: 3px 0 0 1px;
  border: 1px solid #2f2f2f;
  background: linear-gradient(#9c9c9c, #6c6c6c);
}
.app-logo {
  width: 20px;
  height: 24px;
}
.app-btn .caret {
  border-width: 3px 2px 0;
}
.title-rows {
  flex: 1;
  min-width: 0;
}
.title-row {
  display: flex;
  align-items: center;
  height: 23px;
}
.quick {
  display: flex;
  align-items: center;
  margin-left: 4px;
}
.quick-tool {
  width: 19px;
}
.quick-tool:nth-child(n + 7) {
  width: 14px;
}
.more .icon {
  width: 9px;
}
.title {
  flex: 1;
  margin: 0;
  padding-right: 12px;
  font-size: 10px;
  font-weight: 400;
  text-align: center;
}
.tri-right {
  border: 3px solid transparent;
  border-left: 4px solid #111;
  border-right: none;
}
.search {
  width: 141px;
  height: 17px;
  margin-left: 3px;
  padding-left: 2px;
  box-sizing: border-box;
  border: 1px solid #666;
  background: #f6f6f6;
  font-style: italic;
}
.search::placeholder {
  color: #666;
}
.account, .exchange, .help, .win {
  display: flex;
  align-items: center;
}
.account {
  gap: 4px;
  margin-left: 3px;
}
.account .caret {
  margin-left: 44px;
}
.exchange {
  gap: 4px;
  margin-left: 5px;
}
.help {
  gap: 4px;
  margin-left: 13px;
}
.win {
  margin-left: 18px;
}
.title-row .caret {
  border-width: 3px 2px 0;
}
.win-btn {
  width: 13px;
  height: 13px;
}
.win-btn .icon {
  width: 9px;
  height: 9px;
  margin: 2px auto;
}
.menu {
  display: flex;
  align-items: center;
  gap: 18px;
  height: 14px;
  padding-left: 11px;
}
.menu .win {
  margin-left: auto;
}

/* drawing tabs */
.doc-tabs {
  display: flex;
  align-items: flex-end;
  height: 21px;
  margin-right: 3px;
  padding-left: 14px;
  border-bottom: 2px solid #515151;
  background: linear-gradient(#868686, #a1a1a1);
}
.doc-tab {
  display: flex;
  align-items: center;
  width: 102px;
  height: 18px;
  padding: 0 0 3px 12px;
  box-sizing: border-box;
  clip-path: polygon(0 100%, 5px 20%, 9px 0, 93px 0, 97px 20%, 100% 100%);
  background: linear-gradient(#a5a5a5, #999);
  color: #555;
}
.doc-tab.active {
  margin-left: -4px;
  background: linear-gradient(#dcdcdc, #b2b2b2);
  color: #222;
}
.tab-x {
  margin-left: auto;
  padding-right: 12px;
  font-size: 8px;
  color: #777;
}
.new-tab {
  width: 18px;
  height: 12px;
  margin: 0 0 4px 4px;
  border: 1px solid #666;
  border-radius: 2px 6px 2px 6px;
  background: #7f7f7f;
  color: #aaa;
  line-height: 8px;
}

/* horizontal toolbars */
.bars {
  display: flex;
  flex-direction: column;
  gap: 3px;
  margin-right: 3px;
  padding: 3px 0;
}
.bar-row {
  display: flex;
  height: 18px;
}
.grip {
  width: 4px;
  margin: 1px 2px;
  background: #3f3f3f;
}
.strip {
  display: flex;
  flex: none;
  align-items: center;
  background: #f1f1f1;
}
.strip.grow {
  flex: 1;
  min-width: 0;
  overflow: hidden;
}
.sep {
  width: 1px;
  height: 14px;
  margin: 0 2px;
  background: #aaa;
}
.sep.thin {
  margin: 0 1px;
}
.combo {
  display: flex;
  flex: none;
  align-items: center;
  height: 16px;
  padding: 0 3px 0 13px;
  box-sizing: border-box;
  border: 1px solid #8a8a8a;
  background: linear-gradient(#f7f7f7, #e2e2e2);
}
.combo select {
  flex: 1;
  min-width: 0;
  appearance: none;
}
.combo.wide {
  width: 95px;
}
.combo.rest {
  flex: 1;
  padding-left: 3px;
}
.combo.rest .caret {
  display: none;
}
.combo.workspace {
  width: 137px;
  padding-left: 5px;
}
.combo.layer {
  width: 236px;
  padding-left: 1px;
}
.mini {
  width: 12px;
  height: 12px;
  margin-right: 1px;
}
.combo.color {
  width: 117px;
  padding-left: 1px;
}
.combo.ltype {
  width: 126px;
  padding-left: 3px;
}
.combo.lweight {
  flex: 1;
  overflow: hidden;
  padding-left: 2px;
}
.serif {
  font-family: "Liberation Serif", serif;
  font-weight: 700;
}
.rule {
  width: 48px;
  height: 1px;
  margin-right: 4px;
  background: #333;
}
.lweight .rule {
  width: 28px;
}

/* work area */
.work {
  position: relative;
  display: flex;
  flex: 1;
  margin-right: 3px;
}
.dock {
  display: flex;
  gap: 4px;
  width: 45px;
  padding-left: 2px;
  box-sizing: border-box;
}
.vbar {
  width: 18px;
}
.vgrip {
  height: 5px;
  margin: 1px;
  background: #404040;
}
.vstrip {
  display: flex;
  flex-direction: column;
  padding: 1px 0;
  background: #f1f1f1;
}
.hsep {
  height: 1px;
  margin: 2px;
  background: #aaa;
}
.view {
  display: flex;
  flex: 1;
  flex-direction: column;
  min-width: 0;
  margin-left: 2px;
  padding-top: 1px;
}
.canvas {
  position: relative;
  flex: 1;
  overflow: hidden;
  background: #212731;
}
.drawing {
  position: absolute;
  inset: 0;
  width: 100%;
  height: 100%;
}
.shapes {
  fill: none;
  stroke: #d4d7da;
}
.cross {
  fill: none;
  stroke: #e6e8ea;
}
.ucs {
  fill: none;
  stroke: #c6cace;
}
.ucs text {
  font: 300 16px Lato, sans-serif;
  fill: #c6cace;
  stroke: none;
}
.view-label {
  position: absolute;
  top: 5px;
  left: 3px;
  color: #e4e6e8;
}
.cube {
  position: absolute;
  top: 17px;
  right: 18px;
  width: 92px;
  height: 92px;
  box-sizing: border-box;
  border: 9px solid #454c56;
  border-radius: 50%;
  color: #b9bdc2;
  font: 14px/14px "Noto Sans CJK SC", sans-serif;
}
.cube span, .face {
  position: absolute;
}
.n {
  top: -13px;
  left: 30px;
}
.s {
  bottom: -13px;
  left: 30px;
}
.w {
  top: 30px;
  left: -13px;
}
.e {
  top: 30px;
  right: -13px;
}
.face {
  top: 18px;
  left: 18px;
  width: 38px;
  height: 38px;
  background: linear-gradient(135deg, #cfd1d3, #b9bbbe);
  color: #444a52;
  font: 400 22px/36px "Noto Sans CJK SC", sans-serif;
  text-align: center;
}
.wcs {
  position: absolute;
  top: 129px;
  right: 45px;
  width: 37px;
  height: 13px;
  padding-left: 3px;
  border-radius: 3px;
  background: #b2b5c0;
  color: #6b7080;
  font: 700 8px/13px "Liberation Sans", sans-serif;
  text-align: left;
}
.dyn {
  position: absolute;
  top: 442px;
  left: 408px;
}
.dyn::before {
  content: "";
  position: absolute;
  top: 2px;
  left: 14px;
  width: 1px;
  height: 12px;
  background: #111;
}
.dyn-input {
  display: block;
  width: 37px;
  height: 16px;
  padding-left: 2px;
  box-sizing: border-box;
  background: #fff;
}
.dyn-list {
  width: 124px;
  margin: 1px 0 0;
  padding: 0;
  list-style: none;
  background: #fff;
}
.dyn-list li {
  display: flex;
  height: 15px;
  line-height: 15px;
}
.sug-icon {
  width: 16px;
}
.sug-text {
  flex: 1;
  padding-left: 1px;
}
.sug-text.on {
  background: #3397f5;
  color: #fff;
}
.layouts {
  display: flex;
  align-items: center;
  height: 12px;
  background: #f3f3f3;
}
.nav {
  display: flex;
  align-items: center;
  justify-content: center;
  width: 11px;
  height: 12px;
  border-right: 1px solid #bbb;
}
.nav .icon, .hscroll .icon {
  width: 9px;
  height: 9px;
}
.layout {
  height: 12px;
  padding: 0 3px;
  white-space: nowrap;
}
.layout.current {
  width: 37px;
  clip-path: polygon(0 0, 100% 0, 31px 100%, 6px 100%);
  background: #212731;
  color: #fff;
}
.slash {
  width: 1px;
  height: 12px;
  margin: 0 2px;
  background: #444;
  transform: skewX(-25deg);
}
.hscroll {
  width: 242px;
  height: 10px;
  margin-left: auto;
  padding: 2px 6px 0;
  box-sizing: border-box;
  border-left: 1px solid #ccc;
}
.vscroll {
  width: 15px;
  margin-top: 1px;
  background: #f2f2f2;
}
.tri-up {
  width: 0;
  margin: 5px auto 0;
  border: 3px solid transparent;
  border-top: none;
  border-bottom: 4px solid #333;
}
.thumb {
  width: 11px;
  height: 11px;
  margin: 233px 1px 0;
  box-sizing: border-box;
  border: 1px solid #aaa;
  background: linear-gradient(#fff, #d8d8d8);
}
.dock.right {
  width: 25px;
  padding-left: 3px;
}
.behind {
  position: absolute;
  top: 258px;
  right: -3px;
  bottom: 0;
  width: 7px;
  overflow: hidden;
  background: #eee;
}
.behind .icon {
  height: 14px;
}

/* command line */
.command {
  display: flex;
  margin: 5px 3px 2px 1px;
}
.cmd-side {
  display: flex;
  flex-direction: column;
  align-items: center;
  gap: 3px;
  width: 18px;
  background: linear-gradient(#8c8c8c, #565656);
}
.cmd-side .icon {
  width: 12px;
  height: 12px;
}
.dots {
  width: 14px;
  height: 4px;
  margin: 4px 0 1px;
  border-top: 1px dotted #ccc;
  border-bottom: 1px dotted #ccc;
  box-sizing: border-box;
}
.cmd-body {
  flex: 1;
  min-width: 0;
}
.history {
  padding: 1px 2px;
  background: #c9c9c9;
  font-family: "Liberation Mono", "Noto Sans CJK SC", monospace;
  font-size: 9px;
}
.history p {
  margin: 0;
  white-space: pre;
}
.han {
  font-size: 10px;
}
.it {
  font-style: italic;
}
.prompt {
  display: flex;
  align-items: center;
  gap: 4px;
  height: 17px;
  padding-left: 3px;
  background: #fff;
}
.prompt .icon {
  width: 12px;
  height: 12px;
}
.prompt .caret {
  border-width: 3px 2px 0;
}
.prompt input {
  flex: 1;
  margin-left: 2px;
}
.prompt input::placeholder {
  color: #999;
}

/* status bar */
.status {
  display: flex;
  align-items: center;
  height: 20px;
  padding-left: 10px;
  background: linear-gradient(#9b9b9b, #6d6d6d);
}
.coords {
  width: 151px;
  color: #111;
  font: 8px/14px "Liberation Mono", monospace;
}
.mode {
  display: flex;
  flex: none;
  align-items: center;
  justify-content: center;
  width: 17px;
  height: 18px;
  box-sizing: border-box;
  border: 1px solid #808080;
  background: linear-gradient(#c9c9c9, #a3a3a3);
}
.mode.on {
  border-color: #7fa9b8;
  background: linear-gradient(#dff4fa, #92cbdc);
}
.mode .icon {
  width: 12px;
  height: 12px;
}
.status-right {
  display: flex;
  margin-left: 106px;
}
.model {
  width: 24px;
}

/* site mark */
.brand {
  position: absolute;
  right: 0;
  bottom: 0;
  display: flex;
  align-items: center;
  width: 221px;
  height: 110px;
  padding-left: 20px;
  box-sizing: border-box;
  background: #fff;
  color: #111;
}
.brand-logo {
  width: 60px;
  height: 50px;
}
.brand-text {
  display: flex;
  flex-direction: column;
}
.brand-text strong {
  font: 900 24px/26px "Noto Sans CJK SC", sans-serif;
  -webkit-text-stroke: 1px #111;
}
.brand-text em {
  font: 500 15px/18px "Noto Sans", sans-serif;
}
</style>
